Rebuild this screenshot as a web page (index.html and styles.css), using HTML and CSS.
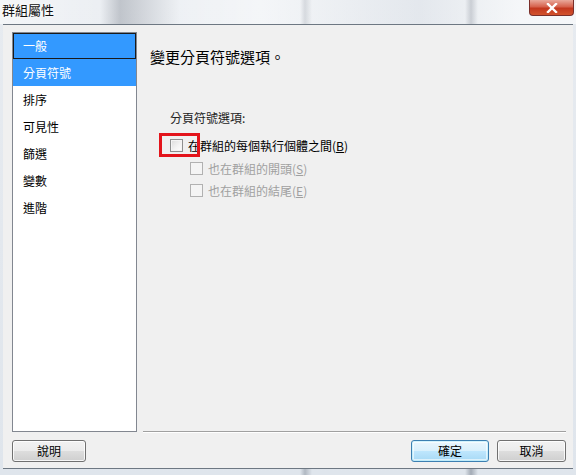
FILE: index.html
```html
<!DOCTYPE html>
<html lang="zh-Hant">
<head>
<meta charset="utf-8">
<title>群組屬性</title>
<link rel="stylesheet" href="styles.css">
</head>
<body>
<div class="window">
  <div class="titlebar">
    <span class="title">群組屬性</span>
    <span class="close-btn">
      <svg width="14" height="10" viewBox="0 0 14 10"><path d="M3 1 L11 9 M11 1 L3 9" stroke="#fff" stroke-width="2.4" stroke-linecap="square"/></svg>
    </span>
  </div>
  <div class="client">
    <div class="main">
      <ul class="nav">
        <li class="nav-item selected focused">一般</li>
        <li class="nav-item selected">分頁符號</li>
        <li class="nav-item">排序</li>
        <li class="nav-item">可見性</li>
        <li class="nav-item">篩選</li>
        <li class="nav-item">變數</li>
        <li class="nav-item">進階</li>
      </ul>
      <div class="pane">
        <h1 class="heading">變更分頁符號選項。</h1>
        <div class="group">
          <div class="group-label">分頁符號選項:</div>
          <label class="check-row first">
            <span class="box"></span>
            <span>在群組的每個執行個體之間(<u>B</u>)</span>
            <span class="annot"></span>
          </label>
          <div class="sub">
            <label class="check-row disabled">
              <span class="box"></span>
              <span>也在群組的開頭(<u>S</u>)</span>
            </label>
            <label class="check-row disabled">
              <span class="box"></span>
              <span>也在群組的結尾(<u>E</u>)</span>
            </label>
          </div>
        </div>
      </div>
    </div>
    <div class="footer">
      <button class="btn help">說明</button>
      <div class="spacer"></div>
      <button class="btn default">確定</button>
      <button class="btn cancel">取消</button>
    </div>
  </div>
</div>
</body>
</html>
```
FILE: styles.css
```css
* { box-sizing: border-box; }
html, body { margin: 0; padding: 0; }
body {
  width: 576px;
  height: 475px;
  overflow: hidden;
  font-family: "Noto Sans CJK TC", "Noto Sans", sans-serif;
  font-size: 12px;
  color: #000;
  background: #dbe3ec;
}
.window {
  width: 576px;
  height: 475px;
  display: flex;
  flex-direction: column;
  background:
    linear-gradient(90deg, rgba(255,255,255,0) 0, rgba(255,255,255,0) 300px, rgba(90,100,115,.35) 305px, rgba(255,255,255,0) 312px, rgba(255,255,255,0) 465px, rgba(90,100,115,.45) 471px, rgba(255,255,255,0) 478px),
    linear-gradient(180deg, #e7ebf0 0, #dfe5ec 100%);
}
.titlebar {
  height: 24px;
  flex: none;
  position: relative;
  display: flex;
  align-items: center;
  padding-left: 2px;
  background:
    linear-gradient(90deg, rgba(255,255,255,.55) 0, rgba(255,255,255,.2) 100px, rgba(120,125,135,.35) 120px, rgba(255,255,255,.3) 180px, rgba(255,255,255,.55) 260px, rgba(220,224,230,.3) 420px, rgba(255,255,255,.6) 520px);
}
.title {
  font-size: 13px;
  line-height: 16px;
  margin-top: -4px;
  color: #111;
  text-shadow: 0 0 6px #fff, 0 0 3px #fff;
}
.close-btn {
  position: absolute;
  top: 0;
  right: 2px;
  width: 45px;
  height: 16px;
  border: 1px solid #7a2f2a;
  border-top: none;
  border-radius: 0 0 4px 4px;
  background: linear-gradient(180deg, #e9a99b 0, #d6624d 45%, #c3381f 55%, #d2532d 100%);
  display: flex;
  align-items: center;
  justify-content: center;
}
.client {
  flex: 1;
  margin: 0 3px 6px 3px;
  border-top: 1px solid #6d7782;
  border-bottom: 1px solid #6d7782;
  background: #f0f0f0;
  display: flex;
  flex-direction: column;
  padding: 7px 7px 0 9px;
}
.main {
  display: flex;
  height: 400px;
}
.nav {
  list-style: none;
  margin: 0;
  padding: 0;
  width: 125px;
  flex: none;
  background: #fff;
  border: 1px solid #828790;
}
.nav-item {
  height: 27px;
  line-height: 27px;
  padding-left: 10px;
  font-size: 12px;
  color: #000;
}
.nav-item.selected {
  background: #3399ff;
  color: #fff;
}
.nav-item.focused {
  height: 26px;
  line-height: 24px;
  border: 1px solid #1a1a1a;
  padding-left: 9px;
}
.pane {
  flex: 1;
  margin-left: 6px;
  border-bottom: 1px solid #a0a0a0;
  box-shadow: 0 1px 0 #fff;
  padding: 15px 0 0 7px;
}
.heading {
  margin: 0;
  font-size: 15px;
  font-weight: normal;
  line-height: 20px;
  color: #000;
}
.group {
  margin-top: 42px;
  padding-left: 20px;
}
.group-label {
  line-height: 18px;
  color: #222;
}
.check-row {
  position: relative;
  display: flex;
  align-items: center;
  height: 22px;
  gap: 5px;
  color: #000;
}
.check-row.first {
  margin-top: 6px;
  height: 24px;
}
.box {
  width: 13px;
  height: 13px;
  flex: none;
  border: 1px solid #8e8f8f;
  background: linear-gradient(135deg, #dcdcdc 0, #f4f4f4 60%, #fefefe 100%);
  box-shadow: inset 0 0 0 1px #f4f4f4;
}
.check-row u { text-decoration: underline; }
.disabled { color: #a0a0a0; }
.disabled .box {
  border-color: #b1b1b1;
  background: #f4f4f4;
  box-shadow: none;
}
.sub { padding-left: 20px; }
.annot {
  position: absolute;
  left: -11px;
  top: 0;
  width: 41px;
  height: 24px;
  border: 3px solid #e3141b;
}
.footer {
  display: flex;
  align-items: center;
  margin-top: 8px;
  height: 22px;
}
.spacer { flex: 1; }
.btn {
  height: 22px;
  font-family: "Noto Sans CJK TC", "Noto Sans", sans-serif;
  font-size: 12px;
  line-height: 18px;
  padding: 0;
  color: #000;
  border: 1px solid #707070;
  border-radius: 3px;
  background: linear-gradient(180deg, #f2f2f2 0, #ebebeb 50%, #dddddd 51%, #cfcfcf 100%);
  box-shadow: inset 0 0 0 1px rgba(255,255,255,.8);
}
.help { width: 74px; }
.default {
  width: 78px;
  border-color: #3c7fb1;
  background: linear-gradient(180deg, #eaf6fd 0, #d9f0fc 50%, #bee6fd 51%, #a7d9f5 100%);
  box-shadow: inset 0 0 0 1px #48d6fc33, inset 0 0 0 2px rgba(255,255,255,.6);
}
.cancel { width: 69px; margin-left: 8px; }
```
